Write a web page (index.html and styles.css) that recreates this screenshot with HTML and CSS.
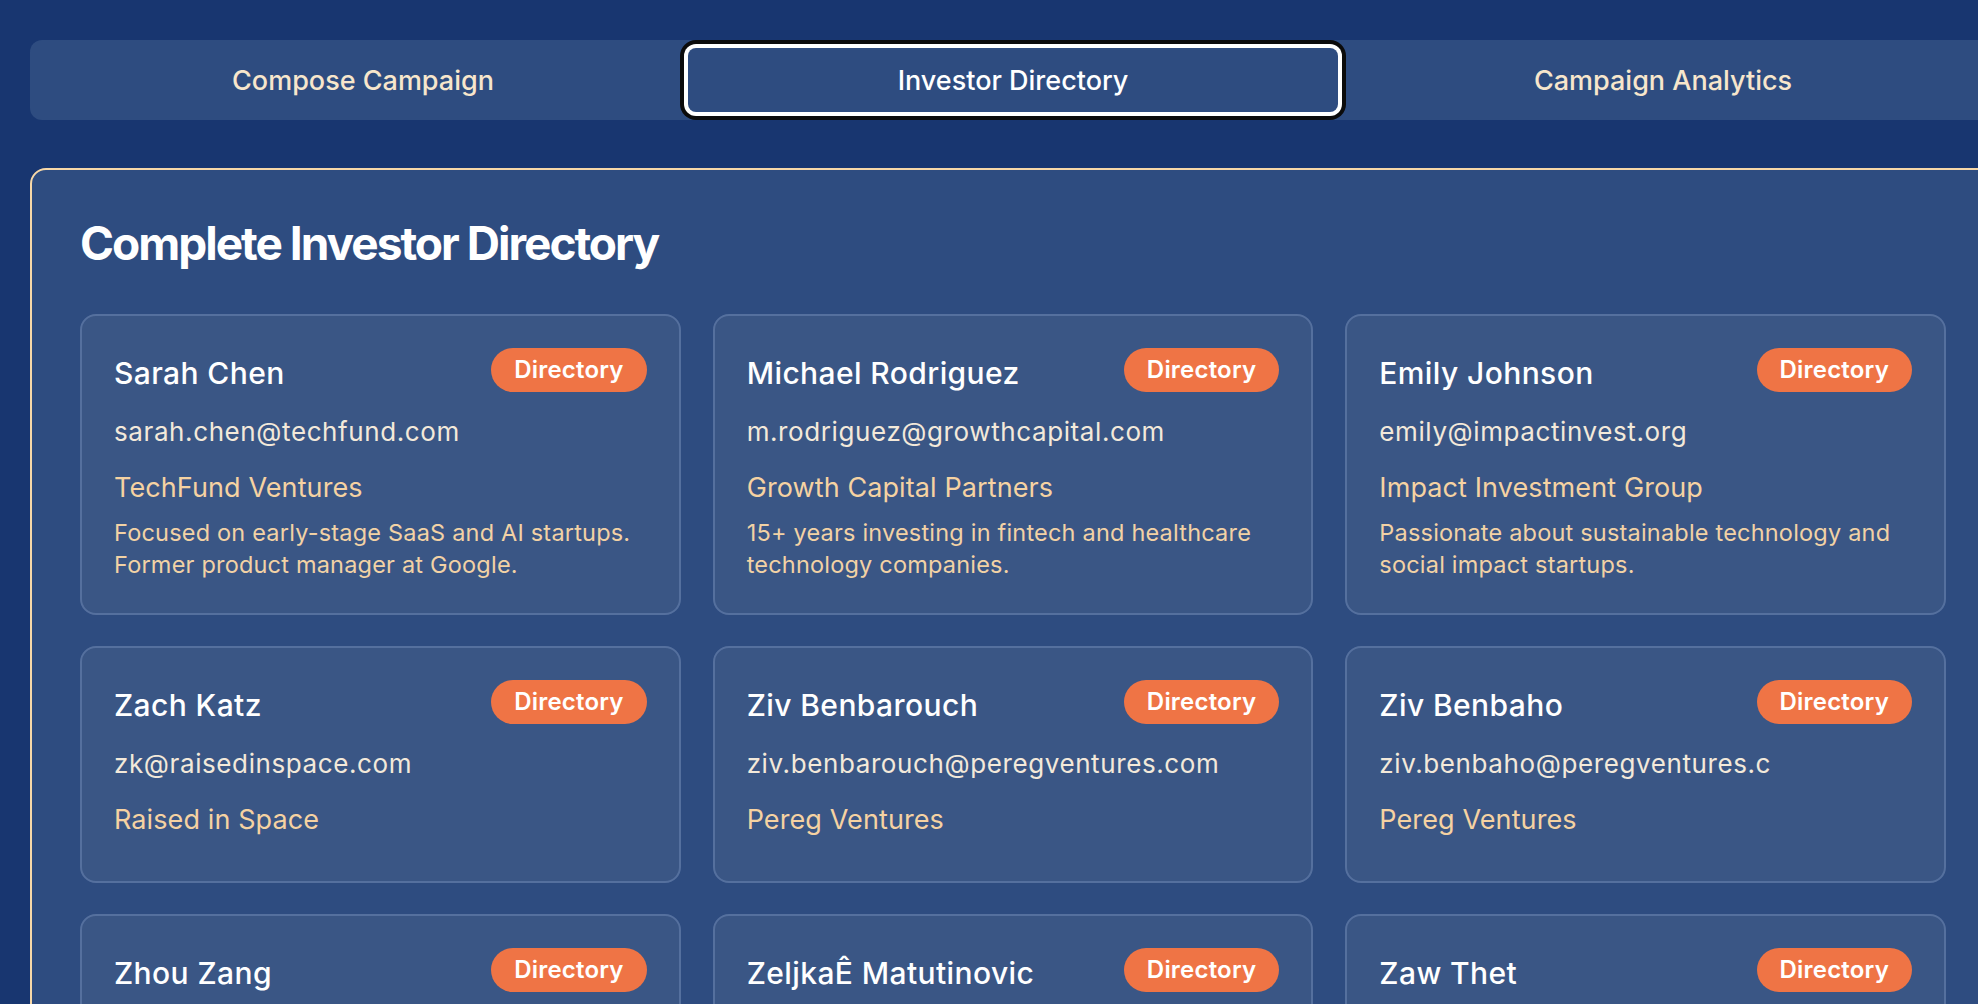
FILE: index.html
```html
<!DOCTYPE html>
<html lang="en">
<head>
<meta charset="utf-8">
<title>Investor Directory</title>
<link rel="stylesheet" href="styles.css">
</head>
<body>
<div class="app">
  <nav class="tabs">
    <button class="tab">Compose Campaign</button>
    <button class="tab tab-active">Investor Directory</button>
    <button class="tab">Campaign Analytics</button>
  </nav>

  <section class="panel">
    <h1 class="title">Complete Investor Directory</h1>
    <div class="grid">
      <article class="card">
        <div class="card-head"><h2 class="name">Sarah Chen</h2><span class="badge">Directory</span></div>
        <div class="email">sarah.chen@techfund.com</div>
        <div class="company">TechFund Ventures</div>
        <p class="desc">Focused on early-stage SaaS and AI startups. Former product manager at Google.</p>
      </article>
      <article class="card">
        <div class="card-head"><h2 class="name">Michael Rodriguez</h2><span class="badge">Directory</span></div>
        <div class="email">m.rodriguez@growthcapital.com</div>
        <div class="company">Growth Capital Partners</div>
        <p class="desc">15+ years investing in fintech and healthcare technology companies.</p>
      </article>
      <article class="card">
        <div class="card-head"><h2 class="name">Emily Johnson</h2><span class="badge">Directory</span></div>
        <div class="email">emily@impactinvest.org</div>
        <div class="company">Impact Investment Group</div>
        <p class="desc">Passionate about sustainable technology and social impact startups.</p>
      </article>
      <article class="card">
        <div class="card-head"><h2 class="name">Zach Katz</h2><span class="badge">Directory</span></div>
        <div class="email">zk@raisedinspace.com</div>
        <div class="company">Raised in Space</div>
      </article>
      <article class="card">
        <div class="card-head"><h2 class="name">Ziv Benbarouch</h2><span class="badge">Directory</span></div>
        <div class="email">ziv.benbarouch@peregventures.com</div>
        <div class="company">Pereg Ventures</div>
      </article>
      <article class="card">
        <div class="card-head"><h2 class="name">Ziv Benbaho</h2><span class="badge">Directory</span></div>
        <div class="email">ziv.benbaho@peregventures.c</div>
        <div class="company">Pereg Ventures</div>
      </article>
      <article class="card">
        <div class="card-head"><h2 class="name">Zhou Zang</h2><span class="badge">Directory</span></div>
      </article>
      <article class="card">
        <div class="card-head"><h2 class="name">ZeljkaÊ Matutinovic</h2><span class="badge">Directory</span></div>
      </article>
      <article class="card">
        <div class="card-head"><h2 class="name">Zaw Thet</h2><span class="badge">Directory</span></div>
      </article>
    </div>
  </section>
</div>
</body>
</html>
```

FILE: styles.css
```css
html, body {
  margin: 0;
  padding: 0;
  overflow: hidden;
  background: #183670;
}

body {
  font-family: Inter, "Noto Sans", "Liberation Sans", sans-serif;
  color: #ffffff;
}

.app {
  width: 1966px;
  margin: 40px 0 0 30px;
}

.tabs {
  display: flex;
  padding: 8px;
  background: #2e4c80;
  border-radius: 12px;
}

.tab {
  flex: 1 1 0;
  height: 64px;
  border: 0;
  background: transparent;
  color: #f7e6cc;
  font-family: inherit;
  font-size: 27px;
  font-weight: 500;
  letter-spacing: 0;
  border-radius: 8px;
  cursor: pointer;
}

.tab-active {
  color: #ffffff;
  background: #2e4c80;
  box-shadow: 0 0 0 4px #ffffff, 0 0 0 8px #0b0b0b;
}

.panel {
  margin-top: 48px;
  padding: 48px;
  background: #2e4c80;
  border: 2px solid #f7d8a8;
  border-radius: 16px;
}

.title {
  margin: -3px 0 43px 0;
  font-size: 46px;
  font-weight: 700;
  letter-spacing: -2px;
  line-height: 56px;
  color: #ffffff;
}

.grid {
  display: grid;
  grid-template-columns: repeat(3, 1fr);
  gap: 31px 32px;
}

.card {
  background: #3a5685;
  border: 2px solid #55709e;
  border-radius: 16px;
  padding: 32px;
}

.card-head {
  display: flex;
  align-items: center;
  justify-content: space-between;
  margin-bottom: 24px;
}

.name {
  margin: 5px 0 0 0;
  font-size: 30px;
  font-weight: 500;
  letter-spacing: 0.4px;
  line-height: 36px;
  color: #ffffff;
}

.badge {
  display: inline-block;
  padding: 8px 23px;
  background: #ef7445;
  border-radius: 22px;
  font-size: 24px;
  font-weight: 600;
  line-height: 28px;
  letter-spacing: 0.2px;
  color: #ffffff;
}

.email {
  font-size: 26px;
  line-height: 32px;
  letter-spacing: 0.6px;
  color: #f3e9da;
  margin-bottom: 23px;
}

.company {
  font-size: 27px;
  line-height: 34px;
  letter-spacing: 0.1px;
  color: #f5d2a2;
  margin-bottom: 12px;
}

.desc {
  margin: 0;
  font-size: 23.5px;
  line-height: 32px;
  letter-spacing: 0.2px;
  color: #f2d2a5;
}
```
